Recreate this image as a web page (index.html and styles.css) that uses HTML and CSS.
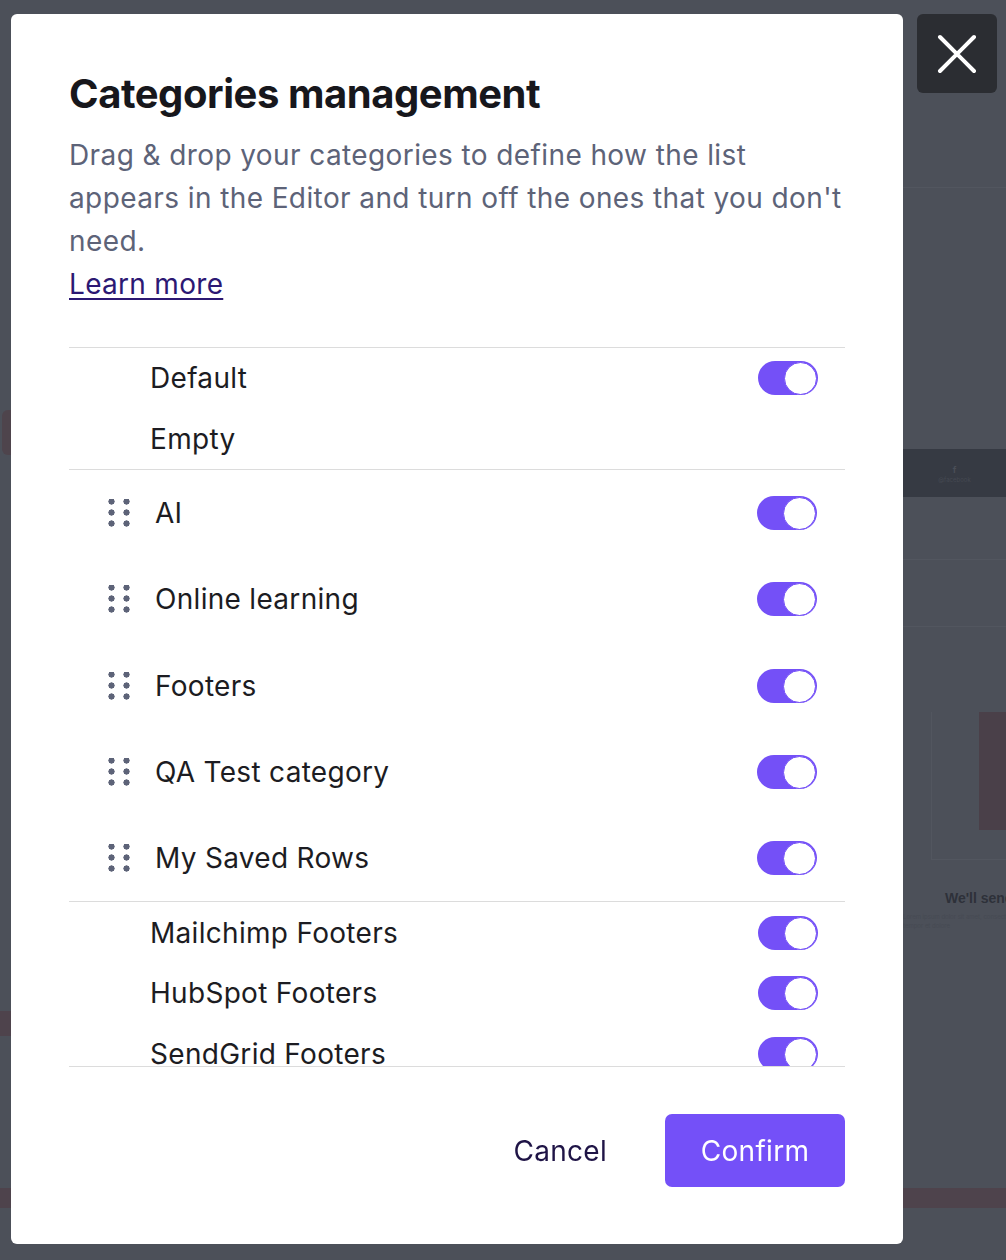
FILE: index.html
```html
<!DOCTYPE html>
<html lang="en">

<head>
    <meta charset="UTF-8">
    <meta name="viewport" content="width=device-width, initial-scale=1.0">
    <title>Categories management</title>
    <link rel="stylesheet" href="styles.css">
</head>

<body>
    <!--Pagina del editor detras del overlay-->
    <div class="page">
        <div class="page-line first"></div>
        <div class="page-row">
            <div class="left-tab"></div>
            <div class="page-band dark">
                <span class="fb">f</span>
                <span class="fb-handle">@facebook</span>
            </div>
        </div>
        <div class="page-line gap1"></div>
        <div class="page-line gap2"></div>
        <div class="page-frame">
            <div class="page-box"></div>
        </div>
        <h3 class="page-title">We'll send you a gift</h3>
        <p class="page-text">Lorem ipsum dolor sit amet, consectetur adipiscing<br>tempor et dolore</p>
        <div class="left-band"></div>
        <div class="page-band red"></div>
    </div>

    <div class="overlay">
        <section class="modal">
            <h2>Categories management</h2>
            <p class="intro">Drag &amp; drop your categories to define how the list appears in the Editor and turn off the ones that you don't need.</p>
            <a class="learn" href="#">Learn more</a>

            <div class="list">
                <ul class="group fixed">
                    <li><span class="name">Default</span><i class="toggle on"></i></li>
                    <li><span class="name">Empty</span></li>
                </ul>
                <ul class="group sortable">
                    <li><i class="handle"></i><span class="name">AI</span><i class="toggle on"></i></li>
                    <li><i class="handle"></i><span class="name">Online learning</span><i class="toggle on"></i></li>
                    <li><i class="handle"></i><span class="name">Footers</span><i class="toggle on"></i></li>
                    <li><i class="handle"></i><span class="name">QA Test category</span><i class="toggle on"></i></li>
                    <li><i class="handle"></i><span class="name">My Saved Rows</span><i class="toggle on"></i></li>
                </ul>
                <ul class="group fixed partners">
                    <li><span class="name">Mailchimp Footers</span><i class="toggle on"></i></li>
                    <li><span class="name">HubSpot Footers</span><i class="toggle on"></i></li>
                    <li><span class="name">SendGrid Footers</span><i class="toggle on"></i></li>
                </ul>
            </div>

            <footer>
                <button class="cancel">Cancel</button>
                <button class="confirm">Confirm</button>
            </footer>
        </section>

        <button class="close" aria-label="Close">
            <svg width="40" height="40" viewBox="0 0 40 40">
                <path d="M3 3 L37 37 M37 3 L3 37" stroke="#fff" stroke-width="4" stroke-linecap="round" fill="none"/>
            </svg>
        </button>
    </div>
</body>

</html>
```

FILE: styles.css
```css
* {
    box-sizing: border-box;
}

body {
    margin: 0;
    font-family: Inter, "Noto Sans", sans-serif;
    background-color: #4c5059;
    height: 1260px;
    overflow: hidden;
}

/*Pagina de fondo (apagada)*/
.page {
    display: flex;
    flex-direction: column;
    align-items: flex-end;
}

.page-line {
    width: 103px;
    height: 1px;
    background-color: #52565f;

    &.first {
        margin-top: 187px;
    }

    &.gap1 {
        margin-top: 62px;
    }

    &.gap2 {
        margin-top: 66px;
    }
}

.page-row {
    width: 100%;
    display: flex;
    justify-content: space-between;
    align-items: flex-start;
    margin-top: 222px;
}

.left-tab {
    width: 12px;
    height: 45px;
    margin-left: 2px;
    border-radius: 6px 0 0 6px;
    background-color: #4e444c;
}

.page-band {
    width: 103px;
    height: 48px;
    display: flex;
    flex-direction: column;
    align-items: center;
    justify-content: center;

    &.dark {
        margin-top: 39px;
        background-color: #363a43;
    }

    &.red {
        width: 100%;
        height: 20px;
        margin-top: 152px;
        background-color: #4e434c;
    }
}

.fb {
    font-size: 9px;
    line-height: 12px;
    color: #4a4e57;
    font-weight: 700;
}

.fb-handle {
    font-size: 6px;
    color: #454952;
}

.page-frame {
    width: 75px;
    height: 148px;
    margin-top: 85px;
    border-left: 1px solid #52565f;
    border-bottom: 1px solid #52565f;
    padding: 0 0 0 47px;
}

.page-box {
    width: 27px;
    height: 118px;
    background-color: #4a4049;
}

.page-title {
    width: 103px;
    margin: 30px 0 0;
    padding-left: 42px;
    font-family: "Liberation Sans", sans-serif;
    font-size: 14px;
    line-height: 16px;
    color: #2e3139;
    white-space: nowrap;
    overflow: hidden;
}

.page-text {
    width: 103px;
    margin: 6px 0 0;
    font-size: 6px;
    line-height: 9px;
    color: #464a53;
    white-space: nowrap;
    overflow: hidden;
}

.left-band {
    align-self: flex-start;
    width: 12px;
    height: 25px;
    margin-top: 81px;
    background-color: #4e434c;
}

/*Overlay y modal*/
.overlay {
    position: fixed;
    inset: 0;
    display: flex;
    align-items: flex-start;
    padding: 14px 0 0 11px;
    gap: 14px;
}

.modal {
    width: 892px;
    height: 1230px;
    background-color: #fff;
    border-radius: 6px;
    padding: 69px 58px 0;
    display: flex;
    flex-direction: column;

    h2 {
        margin: 0;
        font-size: 40px;
        font-weight: 700;
        line-height: 22px;
        color: #17171c;
        letter-spacing: -0.45px;
    }
}

.intro {
    margin: 29px 0 0;
    font-size: 28px;
    line-height: 43px;
    color: #5d6378;
    letter-spacing: 0.4px;
}

.learn {
    align-self: flex-start;
    font-size: 28px;
    line-height: 43px;
    color: #2c1873;
    text-decoration-thickness: 2px;
    text-underline-offset: 4px;
    letter-spacing: 0.3px;
}

.list {
    margin-top: 41px;
    height: 720px;
    overflow: hidden;
    border-top: 1px solid #dcdcdc;
    border-bottom: 1px solid #dcdcdc;
}

.group {
    list-style: none;
    margin: 0;
    padding: 0;
    border-bottom: 1px solid #dcdcdc;

    li {
        display: flex;
        align-items: center;
    }

    .name {
        flex-grow: 1;
        font-size: 28px;
        color: #1c1c22;
        letter-spacing: 0.3px;
    }

    &.fixed {
        padding: 0 27px 0 81px;

        li {
            height: 60.5px;
        }
    }

    &.sortable {
        padding: 0 28px 0 39px;

        li {
            height: 86.3px;
        }
    }
}

.handle {
    width: 22px;
    height: 28px;
    margin-right: 25px;
    background-image: radial-gradient(circle, #5d6378 2.9px, transparent 3.3px);
    background-size: 15px 11px;
    background-position: -4px -3px;
}

.toggle {
    width: 60px;
    height: 34px;
    border-radius: 999px;
    background-color: #7450f7;
    position: relative;

    &::after {
        content: "";
        position: absolute;
        top: 1px;
        right: 1px;
        width: 31px;
        height: 31px;
        border-radius: 50%;
        background-color: #fff;
        border: 1px solid #7450f7;
    }
}

footer {
    display: flex;
    justify-content: flex-end;
    align-items: center;
    gap: 38px;
    margin-top: 47px;

    button {
        font-family: inherit;
        font-size: 28px;
        border: none;
        cursor: pointer;
        letter-spacing: 0.3px;
    }

    .cancel {
        background: none;
        color: #1f1446;
        padding: 0 20px;
    }

    .confirm {
        width: 180px;
        height: 73px;
        border-radius: 7px;
        background-color: #7450f8;
        color: #fff;
    }
}

.close {
    width: 80px;
    height: 79px;
    border: none;
    border-radius: 6px;
    background-color: #2b2d32;
    display: flex;
    align-items: center;
    justify-content: center;
    padding: 0;
    cursor: pointer;
}
```
